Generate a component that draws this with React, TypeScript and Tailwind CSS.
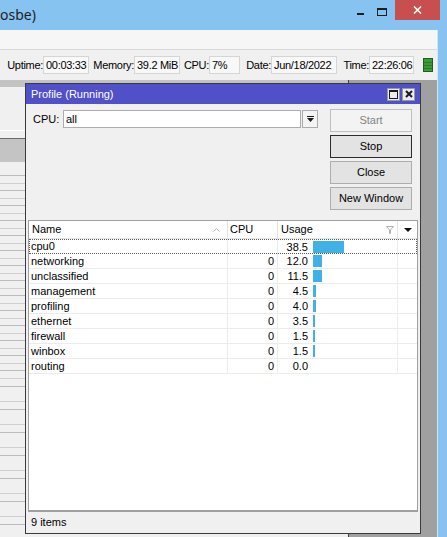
import React from "react";

type Row = { name: string; cpu: string; usage: string; bar: number };

const ROWS: Row[] = [
  { name: "cpu0", cpu: "", usage: "38.5", bar: 31 },
  { name: "networking", cpu: "0", usage: "12.0", bar: 9 },
  { name: "unclassified", cpu: "0", usage: "11.5", bar: 9 },
  { name: "management", cpu: "0", usage: "4.5", bar: 3 },
  { name: "profiling", cpu: "0", usage: "4.0", bar: 3 },
  { name: "ethernet", cpu: "0", usage: "3.5", bar: 2 },
  { name: "firewall", cpu: "0", usage: "1.5", bar: 2 },
  { name: "winbox", cpu: "0", usage: "1.5", bar: 2 },
  { name: "routing", cpu: "0", usage: "0.0", bar: 0 },
];

export default function App() {
  return (
    <div className="flex h-[537px] w-[447px] flex-col overflow-hidden bg-[#87c3f1] font-['Liberation_Sans',Arial,sans-serif] text-[11px] text-black">
      <OuterTitle />
      <div className="flex min-h-0 flex-1">
        <div className="flex w-[437px] flex-col">
          <div className="h-[20px] shrink-0 border-b border-[#d9d9d9] bg-[#f6f6f6]" />
          <StatusStrip />
          <div className="relative min-h-0 flex-1 bg-[#a0a0a0]">
            <BackWindow />
            <ProfileWindow />
          </div>
        </div>
        <div className="w-px bg-[#cfe6f8]" />
      </div>
    </div>
  );
}

/* ─── Outer Windows frame ─────────────────────────────────────────────── */

function OuterTitle() {
  return (
    <div className="flex h-[30px] shrink-0 items-start">
      <span className="mt-[5px] font-['Noto_Sans',sans-serif] text-[14px] leading-[20px] text-[#1e1e1e]">
        osbe)
      </span>
      <div className="ml-auto flex items-start">
        <div className="mt-[13px] h-[2px] w-[7px] bg-[#1e1e1e]" />
        <svg className="ml-[13px] mt-[8px]" width="10" height="8" viewBox="0 0 10 8">
          <rect x="0.5" y="0.5" width="9" height="7" fill="none" stroke="#1e1e1e" />
          <rect x="0" y="0" width="10" height="2" fill="#1e1e1e" />
        </svg>
        <div className="ml-[8px] flex h-[20px] w-[45px] items-center justify-center bg-[#c84f4f]">
          <svg width="9" height="8" viewBox="0 0 9 8">
            <path d="M1 0.5 L8 7.5 M8 0.5 L1 7.5" stroke="#fff" strokeWidth="1.6" />
          </svg>
        </div>
      </div>
      <div className="w-[7px]" />
    </div>
  );
}

function StatusStrip() {
  return (
    <div className="flex h-[30px] shrink-0 items-center bg-[#f0f0f0] pl-[7px] tracking-[-0.3px]">
      <Label className="w-[36px]">Uptime:</Label>
      <Field className="w-[46px]">00:03:33</Field>
      <Label className="ml-[6px] w-[39px]">Memory:</Label>
      <Field className="w-[46px]">39.2 MiB</Field>
      <Label className="ml-[4px] w-[25px]">CPU:</Label>
      <Field className="w-[31px]">7%</Field>
      <Label className="ml-[5px] w-[26px]">Date:</Label>
      <Field className="w-[66px]">Jun/18/2022</Field>
      <Label className="ml-[6px] w-[26px]">Time:</Label>
      <Field className="w-[45px]">22:26:06</Field>
      <svg className="ml-[9px]" width="10" height="14" viewBox="0 0 10 14">
        <rect x="0" y="0" width="10" height="14" fill="#1d5f1d" />
        <rect x="1" y="1" width="8" height="12" fill="#3a9b3a" />
        <path d="M1 4.5 H9 M1 7.5 H9 M1 10.5 H9" stroke="#2a7a2a" strokeWidth="1" />
      </svg>
    </div>
  );
}

function Label({ className, children }: { className: string; children: React.ReactNode }) {
  return (
    <span className={"flex shrink-0 justify-end whitespace-nowrap " + className}>{children}</span>
  );
}

function Field({ className, children }: { className: string; children: React.ReactNode }) {
  return (
    <span
      className={
        "h-[18px] shrink-0 overflow-hidden whitespace-nowrap border border-[#d5d5d5] bg-[#f8f8f8] pl-[2px] leading-[16px] " +
        className
      }
    >
      {children}
    </span>
  );
}

/* ─── MDI: window behind ──────────────────────────────────────────────── */

function BackWindow() {
  return (
    <div className="absolute inset-y-0 left-0 flex w-[349px] flex-col border-r border-[#404040] bg-[#f0f0f0]">
      <div className="h-[7px] shrink-0 bg-[#c3c3c3]" />
      <div className="h-[44px] shrink-0 border-b border-white" />
      <div className="h-[8px] shrink-0 border-b border-[#6a6a6a]" />
      <div className="h-[23px] shrink-0 bg-[#c4c4c4]" />
      <div className="h-[7px] shrink-0" />
      {Array.from({ length: 14 }).map((_, i) => (
        <div key={"u" + i} className="flex shrink-0 flex-col">
          <div className="h-[7px] border-b border-[#bcbcbc]" />
          <div className="h-[8px] border-b border-[#cfcfcf]" />
        </div>
      ))}
      {Array.from({ length: 7 }).map((_, i) => (
        <div key={"l" + i} className="flex shrink-0 flex-col">
          <div className="h-[8px] border-b border-[#bcbcbc]" />
          <div className="h-[15px] border-b border-[#cfcfcf]" />
        </div>
      ))}
    </div>
  );
}

/* ─── Profile window ──────────────────────────────────────────────────── */

function ProfileWindow() {
  return (
    <div className="absolute left-[25px] top-[3px] flex h-[451px] w-[396px] flex-col border border-[#3a3a3a] bg-[#f0f0f0]">
      <div className="flex h-[20px] shrink-0 items-center bg-[#5050c8] pl-[5px] text-white">
        <span>Profile (Running)</span>
        <div className="ml-auto flex gap-[2px] pr-[5px]">
          <TitleButton>
            <svg width="9" height="9" viewBox="0 0 9 9">
              <rect x="0.5" y="0.5" width="8" height="8" fill="none" stroke="#1a1a1a" />
              <rect x="0" y="0" width="9" height="2" fill="#1a1a1a" />
            </svg>
          </TitleButton>
          <TitleButton>
            <svg width="8" height="8" viewBox="0 0 8 8">
              <path d="M1 1 L7 7 M7 1 L1 7" stroke="#1a1a1a" strokeWidth="2" />
            </svg>
          </TitleButton>
        </div>
      </div>

      <div className="flex h-[116px] shrink-0 items-start pl-[7px] pt-[5px]">
        <span className="mt-[1px] w-[30px] leading-[18px]">CPU:</span>
        <div className="mt-[1px] h-[18px] w-[238px] border border-[#abadb3] bg-white pl-[2px] leading-[16px]">
          all
        </div>
        <div className="ml-[1px] mt-[1px] flex h-[18px] w-[16px] items-center justify-center border border-[#acacac] bg-[#f4f4f4]">
          <svg width="7" height="6" viewBox="0 0 7 6">
            <rect x="0" y="0" width="7" height="1" fill="#1a1a1a" />
            <polygon points="0,2 7,2 3.5,6" fill="#1a1a1a" />
          </svg>
        </div>
        <div className="ml-[12px] flex w-[82px] flex-col gap-[3px]">
          <button className="h-[23px] border border-[#bfbfbf] bg-[#f3f3f3] text-[#838383]">Start</button>
          <button className="h-[23px] border border-[#2b2b2b] bg-[#e3e3e3]">Stop</button>
          <button className="h-[23px] border border-[#adadad] bg-[#e3e3e3]">Close</button>
          <button className="h-[23px] border border-[#adadad] bg-[#e3e3e3]">New Window</button>
        </div>
      </div>

      <ProfileTable />

      <div className="flex h-[21px] shrink-0 items-center pl-[5px]">9 items</div>
    </div>
  );
}

function TitleButton({ children }: { children: React.ReactNode }) {
  return (
    <div className="flex h-[13px] w-[13px] items-center justify-center border border-[#9a9a9a] bg-[#ececec]">
      {children}
    </div>
  );
}

function ProfileTable() {
  return (
    <div className="mx-[2px] flex h-[292px] shrink-0 flex-col border border-b-2 border-[#a0a0a0] bg-white">
      <div className="flex h-[18px] shrink-0 border-b border-[#e3e3e3] leading-[17px]">
        <div className="flex w-[199px] items-center justify-between border-r border-[#e3e3e3] pl-[3px] pr-[7px]">
          <span>Name</span>
          <svg width="7" height="4" viewBox="0 0 7 4">
            <path d="M0.5 3.5 L3.5 0.5 L6.5 3.5" fill="none" stroke="#b8b8b8" />
          </svg>
        </div>
        <div className="w-[50px] border-r border-[#e3e3e3] pl-[2px]">CPU</div>
        <div className="flex w-[120px] items-center justify-between border-r border-[#e3e3e3] pl-[3px] pr-[3px]">
          <span>Usage</span>
          <svg width="8" height="8" viewBox="0 0 8 8">
            <path d="M0.5 0.5 H7.5 L4.5 4 V7.5 H3.5 V4 Z" fill="none" stroke="#b0b0b0" />
          </svg>
        </div>
        <div className="flex flex-1 items-center justify-center">
          <svg width="8" height="4" viewBox="0 0 8 4">
            <polygon points="0,0 8,0 4,4" fill="#111" />
          </svg>
        </div>
      </div>

      {ROWS.map((r, i) => (
        <div
          key={r.name}
          className={
            i === 0
              ? "flex h-[15px] shrink-0 leading-[14px] outline-1 -outline-offset-1 outline-dotted outline-[#5a5a5a]"
              : "flex h-[15px] shrink-0 border-b border-[#ececec] leading-[14px]"
          }
        >
          <div className="w-[199px] border-r border-[#ececec] pl-[2px]">{r.name}</div>
          <div className="w-[50px] border-r border-[#ececec] pr-[3px] text-right">{r.cpu}</div>
          <div className="flex w-[120px] items-center border-r border-[#ececec]">
            <span className="w-[30px] text-right">{r.usage}</span>
            {r.bar > 0 && (
              <span className="ml-[5px] h-[12px] bg-[#3fb1e7]" style={{ width: r.bar }} />
            )}
          </div>
          <div className="flex-1" />
        </div>
      ))}
      <div className="flex-1" />
    </div>
  );
}
